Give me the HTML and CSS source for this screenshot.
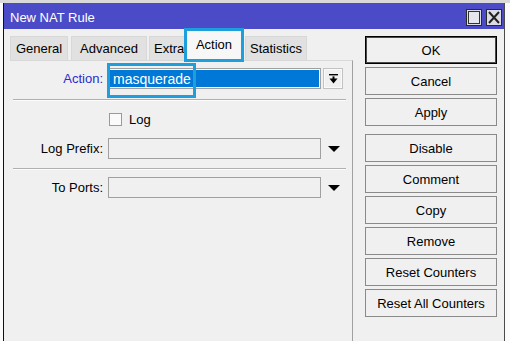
FILE: index.html
```html
<!DOCTYPE html>
<html>
<head>
<meta charset="utf-8">
<link rel="stylesheet" href="styles.css">
</head>
<body>
<div class="window">
  <div class="titlebar">
    <span class="title">New NAT Rule</span>
    <div class="controls">
      <span class="ctl"><span class="max-glyph"></span></span>
      <span class="ctl">
        <svg width="14" height="15" viewBox="0 0 14 15"><path d="M2 2 L12 13 M12 2 L2 13" stroke="#222" stroke-width="2" fill="none"/></svg>
      </span>
    </div>
  </div>
  <div class="content">
    <div class="left">
      <div class="tabs">
        <div class="tab tab-general">General</div>
        <div class="tab tab-advanced">Advanced</div>
        <div class="tab tab-extra">Extra</div>
        <div class="tab tab-active">Action</div>
        <div class="tab tab-stats">Statistics</div>
      </div>
      <div class="panel">
        <div class="row">
          <span class="lbl lbl-blue">Action:</span>
          <div class="field field-selected">masquerade<span class="annot"></span></div>
          <div class="dd dd-btn">
            <svg width="9" height="10" viewBox="0 0 9 10"><rect x="0" y="0" width="9" height="1.4" fill="#000"/><rect x="3.5" y="2.4" width="2" height="2.6" fill="#000"/><path d="M0.5 4.6 L8.5 4.6 L4.5 9.4 Z" fill="#000"/></svg>
          </div>
        </div>
        <div class="sep"></div>
        <div class="row row-log">
          <span class="check"></span>
          <span class="check-label">Log</span>
        </div>
        <div class="row row-prefix">
          <span class="lbl">Log Prefix:</span>
          <div class="field"></div>
          <div class="dd"><span class="tri"></span></div>
        </div>
        <div class="sep sep-second"></div>
        <div class="row row-ports">
          <span class="lbl">To Ports:</span>
          <div class="field"></div>
          <div class="dd"><span class="tri"></span></div>
        </div>
      </div>
    </div>
    <div class="buttons">
      <div class="btn btn-default">OK</div>
      <div class="btn">Cancel</div>
      <div class="btn">Apply</div>
      <div class="btn btn-group">Disable</div>
      <div class="btn">Comment</div>
      <div class="btn">Copy</div>
      <div class="btn">Remove</div>
      <div class="btn">Reset Counters</div>
      <div class="btn">Reset All Counters</div>
    </div>
  </div>
</div>
</body>
</html>
```

FILE: styles.css
```css
* { box-sizing: border-box; }

html, body {
  margin: 0;
  padding: 0;
}

body {
  font-family: "Liberation Sans", Arial, sans-serif;
  font-size: 13px;
  color: #000;
  background: #fbfbfb;
  border-top: 3px solid #dadada;
  padding-left: 3px;
  height: 341px;
  overflow: hidden;
}

.window {
  width: 502px;
  height: 338px;
  border-left: 1px solid #111;
  border-right: 1px solid #4a4a4a;
  background: #f0f0f0;
  display: flex;
  flex-direction: column;
}

.titlebar {
  height: 26px;
  flex: none;
  background: #4b4bc8;
  color: #fff;
  display: flex;
  align-items: center;
  justify-content: space-between;
  padding: 2px 2px 0 6px;
}

.title {
  font-size: 13px;
}

.controls {
  display: flex;
  gap: 4px;
}

.ctl {
  width: 16px;
  height: 17px;
  border: 1px solid #2a2a2a;
  background: #dcdce6;
  display: flex;
  align-items: center;
  justify-content: center;
}

.max-glyph {
  width: 12px;
  height: 13px;
  border: 1px solid #333;
  background: #e6e6ec;
}

.content {
  flex: 1;
  display: flex;
  padding: 1px 7px 0 6px;
  min-height: 0;
}

.left {
  width: 343px;
  display: flex;
  flex-direction: column;
}

.tabs {
  display: flex;
  align-items: flex-end;
  height: 30px;
  flex: none;
}

.tab {
  height: 24px;
  background: #e1e1e1;
  border: 1px solid #d8d8d8;
  border-bottom: none;
  display: flex;
  align-items: center;
  justify-content: center;
  white-space: nowrap;
  overflow: hidden;
}

.tab-general { width: 58px; margin-right: 3px; }
.tab-advanced { width: 76px; margin-right: 2px; }
.tab-extra { width: 37px; justify-content: flex-start; padding-left: 4px; border-right: none; }
.tab-stats { width: 62px; }

.tab-active {
  width: 56px;
  height: 30px;
  margin-right: 3px;
  background: #f7f7f7;
  padding-bottom: 2px;
  outline: 3px solid #1e9fdc;
  outline-offset: -1px;
  position: relative;
  z-index: 1;
}

.panel {
  flex: 1;
  border-top: 1px solid #d8d8d8;
  border-right: 1px solid #a0a0a0;
  padding-top: 7px;
}

.row {
  display: flex;
  align-items: center;
  height: 21px;
}

.lbl {
  width: 93px;
  margin-right: 5px;
  text-align: right;
  white-space: nowrap;
}

.lbl-blue {
  color: #2a2ad0;
}

.field {
  width: 213px;
  height: 21px;
  border: 1px solid #a0a0a0;
  background: #f0f0f0;
}

.field-selected {
  position: relative;
  background: #0078d7;
  box-shadow: inset 0 0 0 1px #fff;
  color: #fff;
  font-size: 14px;
  padding-left: 4px;
  display: flex;
  align-items: center;
}

.annot {
  position: absolute;
  left: -2px;
  top: -6px;
  width: 89px;
  height: 35px;
  border: 3px solid #1e9fdc;
}

.dd {
  width: 20px;
  height: 21px;
  margin-left: 2px;
  display: flex;
  align-items: center;
  justify-content: center;
}

.dd-btn {
  border: 1px solid #c2c2c2;
  background: #f0f0f0;
  box-shadow: inset 0 0 0 1px #fafafa;
}

.tri {
  width: 0;
  height: 0;
  border-left: 6px solid transparent;
  border-right: 6px solid transparent;
  border-top: 6px solid #000;
  margin-left: 1px;
}

.sep {
  margin: 10px 6px 0 3px;
  height: 2px;
  border-top: 1px solid #b0b0b0;
  border-bottom: 1px solid #fcfcfc;
}

.sep-second {
  margin-top: 9px;
}

.row-log {
  margin-top: 11px;
  height: 14px;
}

.check {
  width: 13px;
  height: 13px;
  margin-left: 99px;
  background: #fafafa;
  border: 1px solid #9a9a9a;
}

.check-label {
  margin-left: 7px;
}

.row-prefix {
  margin-top: 12px;
}

.row-ports {
  margin-top: 7px;
}

.buttons {
  width: 132px;
  margin-left: 12px;
  padding-top: 6px;
  display: flex;
  flex-direction: column;
  gap: 3px;
}

.btn {
  height: 28px;
  border: 1px solid #8a8a8a;
  background: #f0f0f0;
  display: flex;
  align-items: center;
  justify-content: center;
  white-space: nowrap;
}

.btn-default {
  border: 1px solid #000;
  box-shadow: inset 0 0 0 1px #4a4a4a;
}

.btn-group {
  margin-top: 5px;
}
```
